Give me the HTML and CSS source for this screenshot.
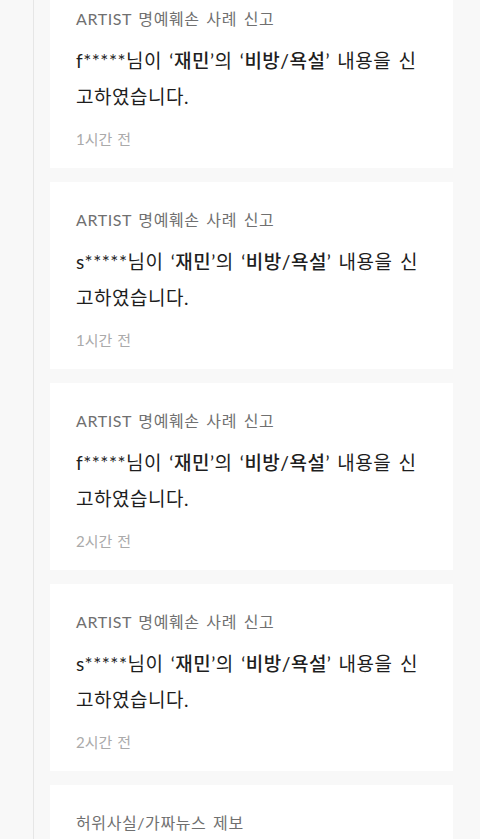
FILE: index.html
```html
<!DOCTYPE html>
<html lang="ko">

<head>
    <meta charset="UTF-8">
    <meta name="viewport" content="width=device-width, initial-scale=1.0">
    <title>신고 내역</title>
    <link rel="stylesheet" href="styles.css">
</head>

<body>

    <div class="timeline">
        <ul class="report-list">
            <li class="report">
                <p class="report-type">ARTIST 명예훼손 사례 신고</p>
                <p class="report-text">f*****님이 ‘<b>재민</b>’의 ‘<b>비방/욕설</b>’ 내용을 신고하였습니다.</p>
                <p class="report-time">1시간 전</p>
            </li>
            <li class="report">
                <p class="report-type">ARTIST 명예훼손 사례 신고</p>
                <p class="report-text">s*****님이 ‘<b>재민</b>’의 ‘<b>비방/욕설</b>’ 내용을 신고하였습니다.</p>
                <p class="report-time">1시간 전</p>
            </li>
            <li class="report">
                <p class="report-type">ARTIST 명예훼손 사례 신고</p>
                <p class="report-text">f*****님이 ‘<b>재민</b>’의 ‘<b>비방/욕설</b>’ 내용을 신고하였습니다.</p>
                <p class="report-time">2시간 전</p>
            </li>
            <li class="report">
                <p class="report-type">ARTIST 명예훼손 사례 신고</p>
                <p class="report-text">s*****님이 ‘<b>재민</b>’의 ‘<b>비방/욕설</b>’ 내용을 신고하였습니다.</p>
                <p class="report-time">2시간 전</p>
            </li>
            <li class="report">
                <p class="report-type">허위사실/가짜뉴스 제보</p>
                <p class="report-text">k*****님이 ‘<b>재민</b>’의 ‘<b>허위사실</b>’ 내용을 제보하였습니다.</p>
                <p class="report-time">3시간 전</p>
            </li>
        </ul>
    </div>

</body>

</html>
```

FILE: styles.css
```css
body {
    font-family: 'Lato', 'Noto Sans CJK KR', sans-serif;
    background-color: #f8f8f8;
    margin: 0;
    padding: 0;
    color: #222;
    overflow: hidden;
}

.timeline {
    margin-left: 33px;
    padding-left: 16px;
    padding-right: 27px;
    border-left: 1px solid #e6e6e6;
    min-height: 100vh;
}

.report-list {
    list-style: none;
    margin: -19px 0 0;
    padding: 0;
    display: flex;
    flex-direction: column;
    gap: 14px;
}

.report {
    background-color: #fff;
    padding: 26px 26px 17px;
}

.report p {
    margin: 0;
}

.report-type {
    font-size: 16px;
    line-height: 24px;
    color: #707070;
    letter-spacing: 0.6px;
    word-spacing: 2px;
}

.report-text {
    font-size: 19px;
    line-height: 36px;
    margin: 12px 0 !important;
    color: #1e1e1e;
    letter-spacing: 0.5px;
    word-spacing: 2px;
}

.report-text b {
    font-weight: 500;
}

.report-time {
    font-size: 15px;
    line-height: 24px;
    color: #aaa;
    word-spacing: 1px;
}
```
